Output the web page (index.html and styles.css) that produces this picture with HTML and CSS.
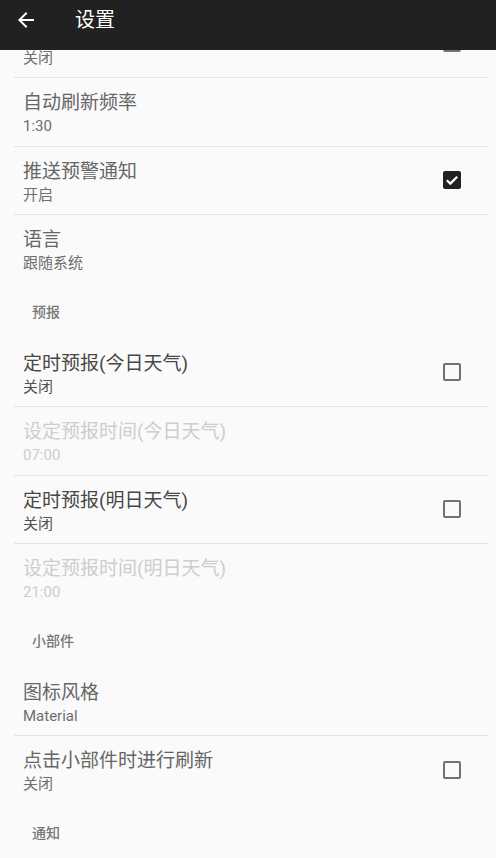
FILE: index.html
```html
<!DOCTYPE html>
<html lang="zh-CN">
<head>
<meta charset="utf-8">
<title>设置</title>
<link rel="stylesheet" href="styles.css">
</head>
<body>
<header class="toolbar">
  <svg class="back" width="24" height="24" viewBox="0 0 24 24"><path d="M20 11H7.83l5.59-5.59L12 4l-8 8 8 8 1.41-1.41L7.83 13H20v-2z" fill="#fff"/></svg>
  <span class="toolbar-title">设置</span>
</header>
<main class="list">
  <div class="item">
    <div class="text"><div class="title"></div><div class="summary">关闭</div></div>
    <span class="check"></span>
  </div>
  <div class="item">
    <div class="text"><div class="title">自动刷新频率</div><div class="summary">1:30</div></div>
  </div>
  <div class="item">
    <div class="text"><div class="title">推送预警通知</div><div class="summary">开启</div></div>
    <span class="check on"><svg width="18" height="18" viewBox="0 0 18 18"><polyline points="3.8,9.3 7.3,12.6 14.2,5.8" fill="none" stroke="#fff" stroke-width="2.2"/></svg></span>
  </div>
  <div class="item last">
    <div class="text"><div class="title">语言</div><div class="summary">跟随系统</div></div>
  </div>
  <div class="category">预报</div>
  <div class="item dark">
    <div class="text"><div class="title">定时预报(今日天气)</div><div class="summary">关闭</div></div>
    <span class="check"></span>
  </div>
  <div class="item disabled">
    <div class="text"><div class="title">设定预报时间(今日天气)</div><div class="summary">07:00</div></div>
  </div>
  <div class="item dark">
    <div class="text"><div class="title">定时预报(明日天气)</div><div class="summary">关闭</div></div>
    <span class="check"></span>
  </div>
  <div class="item disabled last">
    <div class="text"><div class="title">设定预报时间(明日天气)</div><div class="summary">21:00</div></div>
  </div>
  <div class="category">小部件</div>
  <div class="item">
    <div class="text"><div class="title">图标风格</div><div class="summary">Material</div></div>
  </div>
  <div class="item last">
    <div class="text"><div class="title">点击小部件时进行刷新</div><div class="summary">关闭</div></div>
    <span class="check"></span>
  </div>
  <div class="category">通知</div>
</main>
</body>
</html>
```
FILE: styles.css
```css
html, body {
  margin: 0;
  padding: 0;
  background: #fafafa;
  height: 858px;
  overflow: hidden;
  font-family: Roboto, "Noto Sans CJK SC", sans-serif;
}

.toolbar {
  position: fixed;
  top: 0;
  left: 0;
  right: 0;
  height: 50px;
  background: #212121;
  display: flex;
  align-items: center;
  padding-bottom: 10px;
  box-sizing: border-box;
  z-index: 2;
}

.back {
  margin-left: 14px;
  flex: none;
}

.toolbar-title {
  margin-left: 37px;
  color: #fff;
  font-size: 20px;
  line-height: 24px;
}

.list {
  padding-top: 9.5px;
  display: flex;
  flex-direction: column;
}

.item {
  height: 68.5px;
  box-sizing: border-box;
  margin: 0 8px 0 14px;
  padding: 0 27px 0 9px;
  border-bottom: 1px solid #e4e4e4;
  display: flex;
  align-items: center;
  flex: none;
}

.item.last {
  border-bottom: none;
}

.text {
  flex: 1;
  align-self: flex-start;
  padding-top: 12px;
  display: flex;
  flex-direction: column;
}

.title {
  font-size: 19px;
  line-height: 25px;
  min-height: 25px;
  color: #666;
}

.summary {
  font-size: 15px;
  line-height: 23px;
  color: #6e6e6e;
}

.item.dark .title {
  color: #474747;
}

.item.dark .summary {
  color: #505050;
}

.item.disabled .title,
.item.disabled .summary {
  color: #cdcdcd;
}

.check {
  width: 18px;
  height: 18px;
  box-sizing: border-box;
  border: 2px solid #727272;
  border-radius: 2px;
  flex: none;
  display: flex;
  align-items: center;
  justify-content: center;
}

.check.on {
  background: #212121;
  border-color: #212121;
}

.check.on svg {
  flex: none;
}

.category {
  height: 55px;
  flex: none;
  box-sizing: border-box;
  padding: 17px 0 0 32px;
  font-size: 14px;
  line-height: 22px;
  font-weight: 500;
  color: #777;
}
```
